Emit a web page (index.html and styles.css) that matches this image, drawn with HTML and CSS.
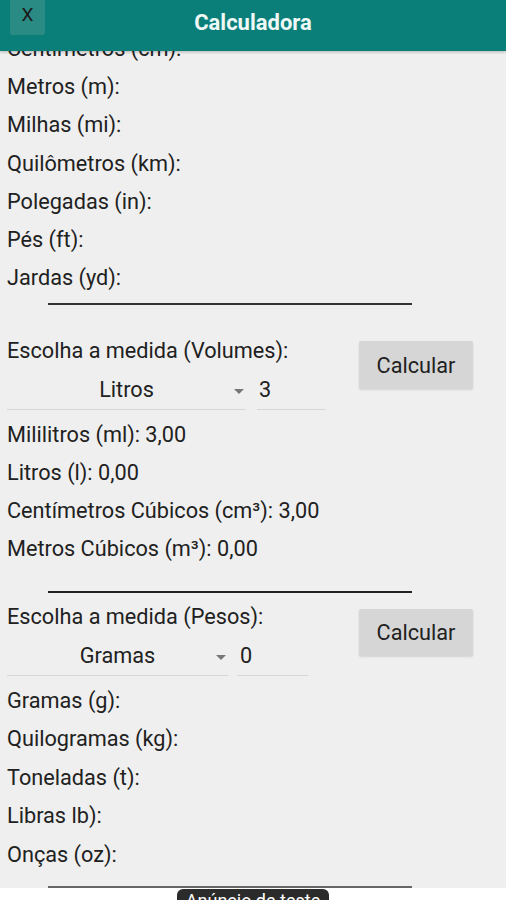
FILE: index.html
```html
<!DOCTYPE html>
<html lang="pt-BR">
<head>
  <meta charset="UTF-8">
  <meta name="viewport" content="width=device-width, initial-scale=1.0">
  <title>Calculadora</title>
  <link rel="stylesheet" href="styles.css">
</head>
<body>
  <header class="topbar">
    <button class="close">X</button>
    <h1>Calculadora</h1>
  </header>

  <main class="scroll">
    <div class="content">
      <div class="rows">
        <p class="row">Centímetros (cm):</p>
        <p class="row">Metros (m):</p>
        <p class="row">Milhas (mi):</p>
        <p class="row">Quilômetros (km):</p>
        <p class="row">Polegadas (in):</p>
        <p class="row">Pés (ft):</p>
        <p class="row">Jardas (yd):</p>
      </div>
      <hr class="divider first">

      <section class="converter volumes">
        <div class="inputs">
          <p class="row">Escolha a medida (Volumes):</p>
          <div class="controls">
            <div class="spinner"><span class="value">Litros</span><span class="caret"></span></div>
            <div class="field">3</div>
          </div>
        </div>
        <button class="calc">Calcular</button>
      </section>

      <div class="rows results">
        <p class="row">Mililitros (ml): 3,00</p>
        <p class="row">Litros (l): 0,00</p>
        <p class="row">Centímetros Cúbicos (cm³): 3,00</p>
        <p class="row">Metros Cúbicos (m³): 0,00</p>
      </div>
      <hr class="divider second">

      <section class="converter pesos">
        <div class="inputs">
          <p class="row">Escolha a medida (Pesos):</p>
          <div class="controls">
            <div class="spinner"><span class="value">Gramas</span><span class="caret"></span></div>
            <div class="field">0</div>
          </div>
        </div>
        <button class="calc">Calcular</button>
      </section>

      <div class="rows results wide">
        <p class="row">Gramas (g):</p>
        <p class="row">Quilogramas (kg):</p>
        <p class="row">Toneladas (t):</p>
        <p class="row">Libras lb):</p>
        <p class="row">Onças (oz):</p>
      </div>
      <hr class="divider last">
    </div>
  </main>

  <footer class="ad">
    <span class="ad-label">Anúncio de teste</span>
  </footer>
</body>
</html>
```

FILE: styles.css
```css
body {
  margin: 0;
  height: 900px;
  display: flex;
  flex-direction: column;
  overflow: hidden;
  font-family: Roboto, "Liberation Sans", sans-serif;
  background-color: #efefef;
  color: #212121;
}

.topbar {
  height: 51px;
  flex: none;
  display: flex;
  align-items: center;
  justify-content: center;
  background-color: #0a7f79;
  box-shadow: 0 1px 3px rgba(0, 0, 0, 0.25);
  z-index: 1;
  position: relative;
}

.topbar h1 {
  margin: 0 0 6px;
  font-size: 22px;
  font-weight: bold;
  color: #eef8f6;
}

.close {
  position: absolute;
  left: 10px;
  top: 0;
  width: 35px;
  height: 35px;
  border: none;
  border-radius: 0 0 2px 2px;
  background-color: #2a8a84;
  color: #1a1a1a;
  font-family: Roboto, "Liberation Sans", sans-serif;
  font-size: 19px;
  padding: 0 0 6px;
}

.scroll {
  flex: 1;
  overflow: hidden;
}

.content {
  margin-top: -21px;
}

.row {
  margin: 0;
  padding-left: 7px;
  font-size: 21.7px;
  line-height: 38.2px;
}

.wide .row {
  line-height: 38.5px;
}

.divider {
  border: none;
  height: 2px;
  width: 364px;
  margin: 6px 0 0 48px;
  background-color: #333;
}

.divider.first {
  margin-bottom: 27px;
}

.divider.second {
  margin-top: 23px;
  margin-bottom: 5px;
  background-color: #222;
}

.divider.last {
  margin-top: 12px;
  margin-bottom: 0;
  background-color: #666;
}

.converter {
  display: flex;
  align-items: flex-start;
  padding-right: 33px;
}

.controls {
  display: flex;
}

.spinner {
  margin-left: 7px;
  width: 239px;
  display: grid;
  grid-template-columns: 1fr auto 1fr;
  align-items: center;
  font-size: 21.7px;
  line-height: 38px;
  border-bottom: 1px solid #d6d6d6;
}

.pesos .spinner {
  width: 221px;
}

.spinner .value {
  grid-column: 2;
}

.caret {
  grid-column: 3;
  justify-self: end;
  margin: 4px 2px 0 0;
  width: 0;
  height: 0;
  border-left: 5px solid transparent;
  border-right: 5px solid transparent;
  border-top: 5px solid #777;
}

.field {
  margin-left: 11px;
  width: 67px;
  padding-left: 2px;
  font-size: 21.7px;
  line-height: 38px;
  border-bottom: 1px solid #d6d6d6;
}

.pesos .field {
  margin-left: 9px;
  width: 68px;
  padding-left: 3px;
}

.calc {
  margin-left: auto;
  margin-top: 9px;
  width: 114px;
  height: 48px;
  border: none;
  border-radius: 2px;
  background-color: #d6d6d6;
  color: #212121;
  font-family: Roboto, "Liberation Sans", sans-serif;
  font-size: 21.7px;
  box-shadow: 0 1px 2px rgba(0, 0, 0, 0.12);
}

.pesos .calc {
  margin-top: 11px;
  height: 47px;
}

.results {
  margin-top: 6px;
}

.ad {
  height: 12px;
  flex: none;
  overflow: hidden;
  background-color: #fff;
  display: flex;
  justify-content: center;
}

.ad-label {
  margin-top: 1px;
  width: 152px;
  height: 24px;
  border-radius: 6px 6px 0 0;
  background-color: #2b2b2b;
  color: #fff;
  font-size: 18px;
  line-height: 23px;
  text-align: center;
}
```
